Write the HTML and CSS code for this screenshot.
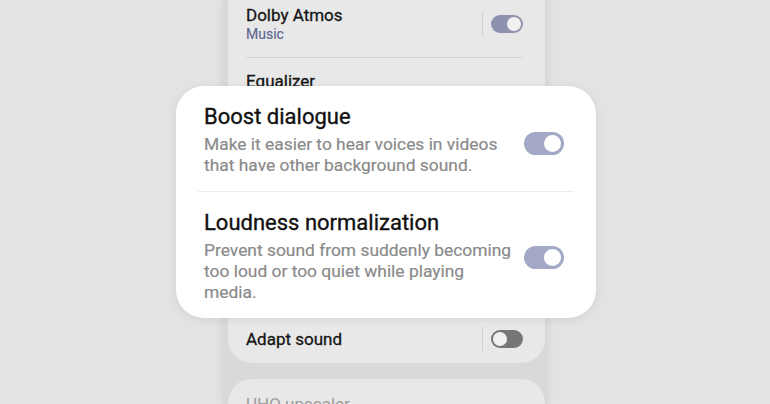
FILE: index.html
```html
<!DOCTYPE html>
<html lang="en">
<head>
    <meta charset="UTF-8">
    <meta name="viewport" content="width=device-width, initial-scale=1.0">
    <title>Sound quality and effects</title>
    <link rel="stylesheet" href="styles.css">
</head>
<body>
    <div class="stage">
        <div class="phone">
            <div class="card card-top">
                <div class="row">
                    <div class="row-text">
                        <div class="row-title">Dolby Atmos</div>
                        <div class="row-sub">Music</div>
                    </div>
                    <span class="vdiv"></span>
                    <span class="toggle small on"></span>
                </div>
                <div class="hdiv"></div>
                <div class="row">
                    <div class="row-text">
                        <div class="row-title">Equalizer</div>
                    </div>
                </div>
            </div>
            <div class="card card-adapt">
                <div class="row">
                    <div class="row-text">
                        <div class="row-title">Adapt sound</div>
                    </div>
                    <span class="vdiv"></span>
                    <span class="toggle small off"></span>
                </div>
            </div>
            <div class="card card-uhq">
                <div class="row">
                    <div class="row-text">
                        <div class="row-title dim">UHQ upscaler</div>
                    </div>
                </div>
            </div>
        </div>

        <!-- zoomed-in popout of the two new options -->
        <div class="popout">
            <div class="opt">
                <div class="opt-text">
                    <div class="opt-title">Boost dialogue</div>
                    <div class="opt-desc">Make it easier to hear voices in videos that have other background sound.</div>
                </div>
                <span class="toggle on"></span>
            </div>
            <div class="popout-div"></div>
            <div class="opt">
                <div class="opt-text">
                    <div class="opt-title">Loudness normalization</div>
                    <div class="opt-desc">Prevent sound from suddenly becoming too loud or too quiet while playing media.</div>
                </div>
                <span class="toggle on"></span>
            </div>
        </div>
    </div>
</body>
</html>
```

FILE: styles.css
```css
body {
    margin: 0;
    background-color: #e3e3e3;
    font-family: Roboto, "Noto Sans", sans-serif;
    overflow: hidden;
}
.stage {
    position: relative;
    width: 770px;
    height: 404px;
    display: flex;
    justify-content: center;
    overflow: hidden;
}
.phone {
    width: 326px;
    height: 404px;
    background-color: #d9d9d9;
    box-shadow: 0 0 8px rgba(0, 0, 0, 0.06);
    padding: 0 3px 0 6px;
    box-sizing: border-box;
    display: flex;
    flex-direction: column;
    gap: 16px;
}
.card {
    background-color: #e8e8e8;
    border-radius: 24px;
    padding: 0 22px 0 18px;
    flex-shrink: 0;
}
.card-top {
    margin-top: -30px;
    padding-top: 30px;
    height: 300px;
    box-sizing: border-box;
}
.card-adapt {
    height: 77px;
    display: flex;
    flex-direction: column;
    justify-content: flex-end;
}
.card-adapt .row {
    min-height: 0;
    height: 48px;
    padding-bottom: 0;
}
.card-uhq {
    height: 60px;
}
.card-uhq .row {
    min-height: 0;
    align-items: flex-start;
    padding-top: 15px;
}
.row {
    display: flex;
    align-items: center;
    min-height: 54px;
}
.card-top .row:first-child {
    min-height: 26px;
    margin-top: 5px;
    padding-bottom: 14px;
}
.card-top .row:last-child {
    align-items: flex-start;
    padding-top: 13px;
}
.row-text {
    flex: 1;
}
.row-title {
    font-size: 17px;
    color: #151515;
    line-height: 20px;
    -webkit-text-stroke: 0.3px #151515;
}
.row-title.dim {
    color: #9c9c9c;
    -webkit-text-stroke: 0;
}
.row-sub {
    font-size: 14px;
    color: #5d6590;
    line-height: 18px;
    -webkit-text-stroke: 0.15px #5d6590;
}
.hdiv {
    height: 1px;
    background-color: #d4d4d4;
}
.vdiv {
    width: 1px;
    height: 24px;
    background-color: #d0d0d0;
    margin-right: 8px;
}
.toggle {
    position: relative;
    width: 40px;
    height: 23px;
    border-radius: 12px;
    background-color: #a4a8c7;
    flex-shrink: 0;
}
.toggle::after {
    content: "";
    position: absolute;
    top: 3px;
    right: 3px;
    width: 17px;
    height: 17px;
    border-radius: 50%;
    background-color: #ffffff;
}
.toggle.small {
    width: 32px;
    height: 18px;
    border-radius: 9px;
}
.toggle.small::after {
    top: 2px;
    right: 2px;
    width: 14px;
    height: 14px;
    background-color: #f0f0f0;
}
.toggle.small.on {
    background-color: #8f92ae;
}
.toggle.small.off {
    background-color: #767676;
}
.toggle.small.off::after {
    right: auto;
    left: 2px;
}
.popout {
    position: absolute;
    left: 176px;
    top: 86px;
    width: 420px;
    height: 232px;
    box-sizing: border-box;
    background-color: #ffffff;
    border-radius: 28px;
    box-shadow: 0 2px 10px rgba(0, 0, 0, 0.08);
    padding: 18px 32px 0 28px;
}
.opt {
    display: flex;
    align-items: center;
    gap: 10px;
}
.opt:first-child {
    padding-bottom: 15px;
}
.opt:last-child {
    padding-top: 18px;
}
.opt-text {
    flex: 1;
}
.opt-title {
    font-size: 22px;
    line-height: 26px;
    color: #111111;
    margin-bottom: 4px;
    -webkit-text-stroke: 0.35px #111111;
}
.opt-desc {
    font-size: 17.4px;
    line-height: 21px;
    color: #8a8a8a;
    -webkit-text-stroke: 0.2px #8a8a8a;
}
.opt:first-child .toggle {
    margin-top: 6px;
}
.opt:last-child .toggle {
    margin-top: 2px;
}
.popout-div {
    height: 1px;
    background-color: #ececec;
    margin: 0 -10px 0 -6px;
}
```
